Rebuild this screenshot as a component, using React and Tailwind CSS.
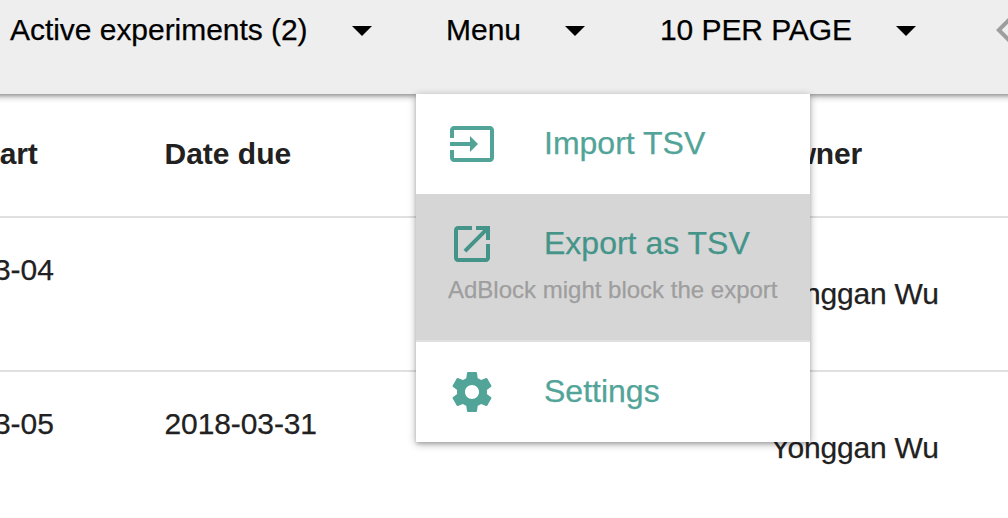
function Caret() {
  return (
    <svg className="h-[48px] w-[48px] shrink-0" viewBox="0 0 24 24" fill="currentColor">
      <path d="M7 10l5 5 5-5z" />
    </svg>
  );
}

const ICONS = {
  input:
    "M21 3.01H3c-1.1 0-2 .9-2 2V9h2V4.99h18v14.03H3V15H1v4.01c0 1.1.9 1.98 2 1.98h18c1.1 0 2-.88 2-1.98v-14c0-1.11-.9-2-2-2zM11 16l4-4-4-4v3H1v2h10v3z",
  openInNew:
    "M19 19H5V5h7V3H5c-1.11 0-2 .9-2 2v14c0 1.1.89 2 2 2h14c1.1 0 2-.9 2-2v-7h-2v7zM14 3v2h3.59l-9.83 9.83 1.41 1.41L19 6.41V10h2V3h-7z",
  settings:
    "M19.43 12.98c.04-.32.07-.64.07-.98s-.03-.66-.07-.98l2.11-1.65c.19-.15.24-.42.12-.64l-2-3.46c-.12-.22-.39-.3-.61-.22l-2.49 1c-.52-.4-1.08-.73-1.69-.98l-.38-2.65C14.46 2.18 14.25 2 14 2h-4c-.25 0-.46.18-.49.42l-.38 2.65c-.61.25-1.17.59-1.69.98l-2.49-1c-.23-.09-.49 0-.61.22l-2 3.46c-.13.22-.07.49.12.64l2.11 1.65c-.04.32-.07.65-.07.98s.03.66.07.98l-2.11 1.65c-.19.15-.24.42-.12.64l2 3.46c.12.22.39.3.61.22l2.49-1c.52.4 1.08.73 1.69.98l.38 2.65c.03.24.24.42.49.42h4c.25 0 .46-.18.49-.42l.38-2.65c.61-.25 1.17-.59 1.69-.98l2.49 1c.23.09.49 0 .61-.22l2-3.46c.12-.22.07-.49-.12-.64l-2.11-1.65zM12 15.5c-1.93 0-3.5-1.57-3.5-3.5s1.57-3.5 3.5-3.5 3.5 1.57 3.5 3.5-1.57 3.5-3.5 3.5z",
};

function MenuItem({ icon, children }) {
  return (
    <div className="flex h-[100px] items-center pl-8">
      <svg className="h-12 w-12 shrink-0" viewBox="0 0 24 24" fill="currentColor">
        <path d={ICONS[icon]} />
      </svg>
      <span className="ml-12 pb-[2px] text-[32px] leading-[64px]">{children}</span>
    </div>
  );
}

function Row({ start, due, owner }) {
  return (
    <div className="flex h-[154px] border-b-2 border-[#e0e0e0] leading-[60px]">
      <div className="w-[264px] shrink-0 pt-[22px]">{start}</div>
      <div className="w-[606px] shrink-0 pt-[22px] tracking-[-0.1px]">{due}</div>
      <div className="shrink-0 pt-[46px] tracking-[-0.2px]">{owner}</div>
    </div>
  );
}

export default function App() {
  return (
    <div className="relative h-[518px] w-[1008px] overflow-hidden bg-white font-['Liberation_Sans',Arial,sans-serif] text-[30px] whitespace-nowrap text-[#212121] [-webkit-text-stroke:0.25px]">
      <header className="relative -mx-4 flex h-[94px] items-start bg-[#eeeeee] pl-[26px] leading-[60px] text-black shadow-[0_2px_7px_rgba(0,0,0,0.36),0_2px_3px_rgba(0,0,0,0.16)]">
        <div className="flex w-[436px] shrink-0 items-center">
          <span className="w-[328px] tracking-[-0.04px]">Active experiments (2)</span>
          <Caret />
        </div>
        <div className="flex w-[214px] shrink-0 items-center">
          <span className="w-[105px]">Menu</span>
          <Caret />
        </div>
        <div className="flex w-[320px] shrink-0 items-center">
          <span className="w-[222px] tracking-[-0.08px]">10 PER PAGE</span>
          <Caret />
        </div>
        <svg className="mt-[6px] h-[48px] w-[48px] shrink-0 fill-[#9e9e9e]" viewBox="0 0 24 24">
          <path d="M15.41 7.41L14 6l-6 6 6 6 1.41-1.41L10.83 12z" />
        </svg>
      </header>

      <main className="-ml-[99.5px]">
        <div className="flex h-[124px] border-b-2 border-[#e0e0e0] pt-[30px] leading-[60px] font-bold [-webkit-text-stroke:0px]">
          <div className="w-[264px] shrink-0 tracking-[-0.12px]">Date start</div>
          <div className="w-[605px] shrink-0">Date due</div>
          <div className="shrink-0 tracking-[-0.2px]">Owner</div>
        </div>
        <Row start="2018-03-04" due="" owner="Yonggan Wu" />
        <Row start="2018-03-05" due="2018-03-31" owner="Yonggan Wu" />
      </main>

      <div className="absolute top-[94px] left-[416px] w-[394px] bg-white text-[#52a499] shadow-[0_2px_8px_rgba(0,0,0,0.32),0_2px_3px_rgba(0,0,0,0.14)]">
        <MenuItem icon="input">Import TSV</MenuItem>
        <div className="h-[148px] border-b-2 border-[#e0e0e0] bg-[#d6d6d6] text-[#449489]">
          <MenuItem icon="openInNew">Export as TSV</MenuItem>
          <div className="-mt-[20px] pl-8 text-[24px] leading-[32px] text-[#9e9e9e]">
            AdBlock might block the export
          </div>
        </div>
        <MenuItem icon="settings">Settings</MenuItem>
      </div>
    </div>
  );
}
